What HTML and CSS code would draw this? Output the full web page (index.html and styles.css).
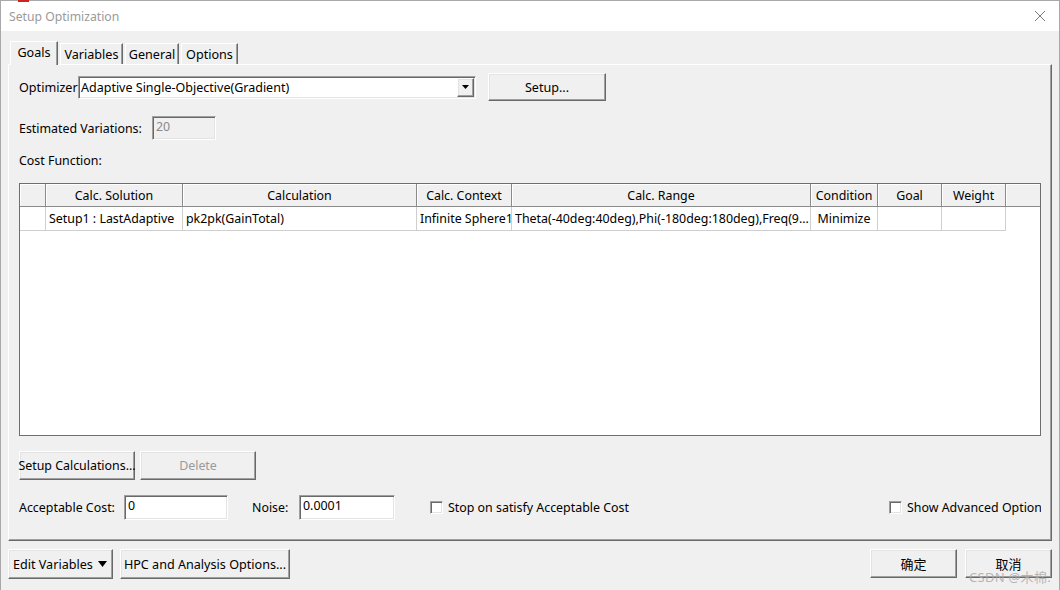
FILE: index.html
```html
<!DOCTYPE html>
<html>
<head>
<meta charset="utf-8">
<link rel="stylesheet" href="styles.css">
</head>
<body>
<div class="window">
  <span class="redmark"></span>
  <div class="titlebar">
    <span class="title">Setup Optimization</span>
    <svg class="close" width="12" height="12" viewBox="0 0 12 12"><path d="M1 1L11 11M11 1L1 11" stroke="#777" stroke-width="1" fill="none"/></svg>
  </div>
  <div class="client">
    <div class="tabs">
      <div class="tab active t-goals">Goals</div>
      <div class="tab t-vars">Variables</div>
      <div class="tab t-gen">General</div>
      <div class="tab t-opts">Options</div>
    </div>
    <div class="panel">
      <div class="row opt-row">
        <span class="opt-label">Optimizer</span>
        <div class="select sunken">
          <span class="select-text">Adaptive Single-Objective(Gradient)</span>
          <span class="drop raised"><svg width="7" height="4" viewBox="0 0 7 4"><path d="M0 0H7L3.5 4Z" fill="#000"/></svg></span>
        </div>
        <div class="btn raised setup-btn">Setup...</div>
      </div>
      <div class="row est-row">
        <span class="est-label">Estimated Variations:</span>
        <div class="input sunken disabled est-input">20</div>
      </div>
      <div class="cost-label">Cost Function:</div>
      <div class="grid">
        <div class="grow head">
          <div class="hc c0"></div>
          <div class="hc c1">Calc. Solution</div>
          <div class="hc c2">Calculation</div>
          <div class="hc c3">Calc. Context</div>
          <div class="hc c4">Calc. Range</div>
          <div class="hc c5">Condition</div>
          <div class="hc c6">Goal</div>
          <div class="hc c7">Weight</div>
          <div class="hc c8"></div>
        </div>
        <div class="grow data">
          <div class="dc c0"></div>
          <div class="dc c1">Setup1 : LastAdaptive</div>
          <div class="dc c2">pk2pk(GainTotal)</div>
          <div class="dc c3">Infinite Sphere1</div>
          <div class="dc c4">Theta(-40deg:40deg),Phi(-180deg:180deg),Freq(9…</div>
          <div class="dc c5 center">Minimize</div>
          <div class="dc c6"></div>
          <div class="dc c7"></div>
        </div>
      </div>
      <div class="row btn-row">
        <div class="btn raised calc-btn">Setup Calculations...</div>
        <div class="btn raised calc-btn disabled-text">Delete</div>
      </div>
      <div class="row cost-row">
        <span class="ac-label">Acceptable Cost:</span>
        <div class="input sunken cost-input">0</div>
        <span class="noise-label">Noise:</span>
        <div class="input sunken noise-input">0.0001</div>
        <span class="check sunken stop-check"></span>
        <span class="check-text">Stop on satisfy Acceptable Cost</span>
        <div class="adv">
          <span class="check sunken"></span>
          <span class="adv-text">Show Advanced Options</span>
        </div>
      </div>
    </div>
    <div class="footer">
      <div class="btn raised edit-btn">Edit Variables <svg width="9" height="6" viewBox="0 0 9 6"><path d="M0 0H9L4.5 6Z" fill="#000"/></svg></div>
      <div class="btn raised hpc-btn">HPC and Analysis Options...</div>
      <div class="btn raised dlg-btn ok-btn">确定</div>
      <div class="btn raised dlg-btn">取消</div>
    </div>
  </div>
  <span class="watermark">CSDN @木棉.</span>
</div>
</body>
</html>
```

FILE: styles.css
```css
* { box-sizing: border-box; }
html, body { margin: 0; padding: 0; }
body {
  width: 1060px;
  height: 590px;
  overflow: hidden;
  background: #f0f0f0;
  font-family: "Noto Sans", "Noto Sans CJK SC", sans-serif;
  font-size: 12.4px;
  color: #000;
}
.window {
  position: relative;
  width: 1060px;
  height: 590px;
  border-top: 1px solid #a8a8a8;
  border-left: 1px solid #a8a8a8;
  border-right: 1px solid #a8a8a8;
  background: #f0f0f0;
}
.redmark {
  position: absolute;
  left: 17px;
  top: -1px;
  width: 11px;
  height: 2px;
  background: #d02020;
}
.titlebar {
  height: 30px;
  background: #fff;
  display: flex;
  align-items: center;
  justify-content: space-between;
  padding: 0 10px 0 8px;
}
.title {
  color: #9a9a9a;
  font-size: 12.2px;
}
.close { margin-right: 3px; }
.client { background: #f0f0f0; }
.tabs {
  display: flex;
  align-items: flex-end;
  height: 33px;
  padding-left: 9px;
  gap: 2px;
}
.tab {
  height: 21px;
  display: flex;
  align-items: center;
  justify-content: center;
  border: 1px solid;
  border-bottom: none;
  border-color: #fff #696969 #696969 #fff;
  box-shadow: inset -1px 0 0 #a0a0a0;
  background: #f0f0f0;
  font-size: 12.6px;
}
.t-goals { width: 48px; }
.t-vars { width: 63px; }
.t-gen { width: 54px; }
.t-opts { width: 57px; }
.tab.active {
  position: relative;
  z-index: 1;
  height: 24px;
  margin-bottom: -1px;
  padding-bottom: 3px;
}
.panel {
  height: 477px;
  border: 1px solid;
  border-color: #fff #696969 #696969 #fff;
  box-shadow: inset -1px -1px 0 #a0a0a0;
  margin-left: 7px;
  width: 1044px;
  padding: 0 10px 0 10px;
  display: flex;
  flex-direction: column;
}
.row { display: flex; align-items: center; }
.sunken {
  border: 1px solid;
  border-color: #a0a0a0 #fff #fff #a0a0a0;
  box-shadow: inset 1px 1px 0 #696969, inset -1px -1px 0 #e3e3e3;
}
.raised {
  border: 1px solid;
  border-color: #fff #696969 #696969 #fff;
  box-shadow: inset -1px -1px 0 #a0a0a0, inset 1px 1px 0 #e3e3e3;
  background: #f0f0f0;
}
.btn {
  display: flex;
  align-items: center;
  justify-content: center;
}
.opt-row { margin-top: 8px; height: 28px; }
.opt-label { width: 59px; font-size: 12.6px; white-space: nowrap; }
.select {
  width: 398px;
  height: 23px;
  background: #fff;
  display: flex;
  align-items: center;
  justify-content: space-between;
  padding: 0 1px 0 2px;
  font-size: 12.5px;
}
.drop {
  width: 17px;
  height: 19px;
  display: flex;
  align-items: center;
  justify-content: center;
}
.setup-btn { width: 118px; height: 28px; margin-left: 12px; font-size: 12.6px; }
.est-row { margin-top: 15px; height: 24px; }
.est-label { width: 133px; white-space: nowrap; }
.input {
  height: 24px;
  background: #fff;
  padding: 1px 3px 0 3px;
  display: flex;
  align-items: flex-start;
}
.input.disabled { background: #f0f0f0; color: #8a8a8a; }
.est-input { width: 64px; }
.cost-label { margin-top: 13px; height: 16px; line-height: 16px; }
.grid {
  margin-top: 14px;
  width: 1022px;
  height: 253px;
  background: #fff;
  border: 1px solid #6e6e6e;
}
.grow { display: flex; }
.head { height: 23px; }
.data { height: 24px; }
.c0 { width: 26px; }
.c1 { width: 137px; }
.c2 { width: 234px; }
.c3 { width: 95px; }
.c4 { width: 299px; }
.c5 { width: 67px; }
.c6 { width: 64px; }
.c7 { width: 64px; }
.c8 { flex: 1; }
.hc {
  background: #f0f0f0;
  border-right: 1px solid #8a8a8a;
  border-bottom: 1px solid #8a8a8a;
  box-shadow: inset 1px 1px 0 #fff;
  display: flex;
  align-items: center;
  justify-content: center;
  white-space: nowrap;
  overflow: hidden;
}
.c8.hc { border-right: none; }
.dc {
  border-right: 1px solid #cfcfcf;
  border-bottom: 1px solid #cfcfcf;
  display: flex;
  align-items: center;
  padding-left: 3px;
  white-space: nowrap;
  overflow: hidden;
}
.dc.center { justify-content: center; padding-left: 0; }
.btn-row { margin-top: 15px; height: 29px; gap: 5px; }
.calc-btn { width: 116px; height: 29px; white-space: nowrap; }
.disabled-text { color: #9a9a9a; }
.cost-row { margin-top: 15px; height: 25px; }
.ac-label { width: 105px; white-space: nowrap; }
.cost-input { width: 104px; height: 25px; }
.noise-label { margin-left: 24px; width: 47px; }
.noise-input { width: 96px; height: 25px; }
.check {
  width: 13px;
  height: 13px;
  background: #fff;
  flex: none;
}
.stop-check { margin-left: 35px; }
.check-text { margin-left: 5px; white-space: nowrap; }
.adv {
  margin-left: auto;
  display: flex;
  align-items: center;
}
.adv-text {
  margin-left: 5px;
  width: 134px;
  overflow: hidden;
  white-space: nowrap;
}
.footer {
  margin-top: 8px;
  padding: 0 7px;
  display: flex;
  gap: 7px;
}
.edit-btn { width: 105px; height: 30px; gap: 5px; font-size: 12.6px; justify-content: flex-start; padding-left: 4px; white-space: nowrap; }
.hpc-btn { width: 170px; height: 30px; font-size: 12.6px; white-space: nowrap; }
.dlg-btn { width: 87px; height: 29px; font-size: 13px; }
.ok-btn { margin-left: auto; margin-right: 1px; }
.watermark {
  position: absolute;
  left: 968px;
  top: 566px;
  font-size: 13px;
  color: rgba(170,170,170,0.85);
  letter-spacing: 0.3px;
}
```
